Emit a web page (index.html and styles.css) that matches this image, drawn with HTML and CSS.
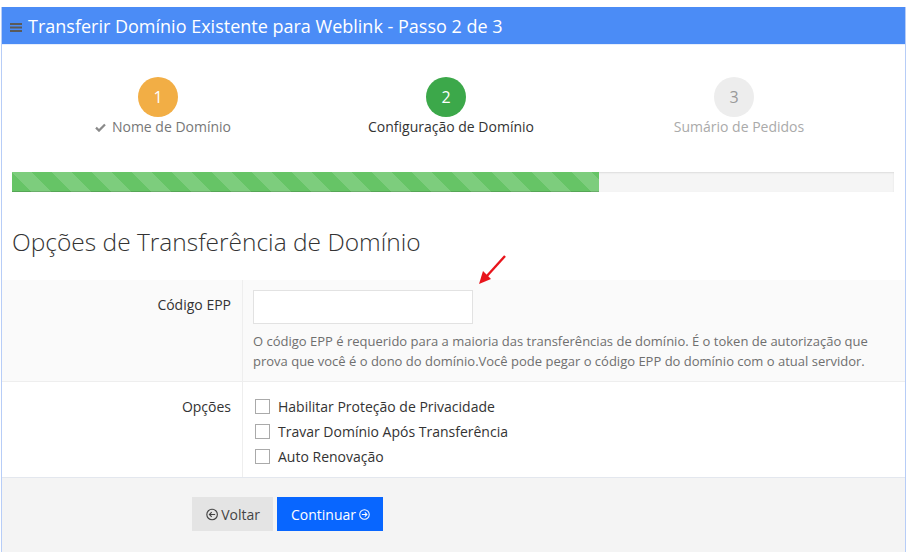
FILE: index.html
```html
<!DOCTYPE html>
<html lang="pt">
<head>
<meta charset="utf-8">
<title>Transferir Domínio</title>
<link rel="stylesheet" href="styles.css">
</head>
<body>
<div class="panel">
  <div class="panel-heading">
    <svg class="hamburger" width="12" height="10" viewBox="0 0 12 10"><rect x="0" y="1" width="12" height="2" fill="#5a5a5a"/><rect x="0" y="4.5" width="12" height="2" fill="#5a5a5a"/><rect x="0" y="8" width="12" height="2" fill="#5a5a5a"/></svg>
    <span class="title">Transferir Domínio Existente para Weblink - Passo 2 de 3</span>
  </div>
  <div class="panel-body">
    <div class="steps">
      <div class="step done">
        <div class="circle">1</div>
        <div class="label"><svg class="check" width="11" height="9" viewBox="0 0 11 9"><path d="M1 4.6 L4 7.6 L10 1.4" fill="none" stroke="#8a8a8a" stroke-width="2.2"/></svg>Nome de Domínio</div>
      </div>
      <div class="step active">
        <div class="circle">2</div>
        <div class="label">Configuração de Domínio</div>
      </div>
      <div class="step todo">
        <div class="circle">3</div>
        <div class="label">Sumário de Pedidos</div>
      </div>
    </div>
    <div class="progress"><div class="progress-bar" style="width:66.6%"></div></div>
    <h2 class="section-title">Opções de Transferência de Domínio</h2>
  </div>
  <div class="form">
    <div class="row shaded">
      <div class="row-label">Código EPP</div>
      <div class="row-field">
        <input class="text-input" type="text">
        <p class="help">O código EPP é requerido para a maioria das transferências de domínio. É o token de autorização que prova que você é o dono do domínio.Você pode pegar o código EPP do domínio com o atual servidor.</p>
      </div>
    </div>
    <div class="row">
      <div class="row-label opt-label">Opções</div>
      <div class="row-field opts">
        <label class="opt"><span class="box"></span>Habilitar Proteção de Privacidade</label>
        <label class="opt"><span class="box"></span>Travar Domínio Após Transferência</label>
        <label class="opt"><span class="box"></span>Auto Renovação</label>
      </div>
    </div>
  </div>
  <div class="panel-footer">
    <button class="btn btn-back"><svg width="15" height="15" viewBox="0 0 15 15"><circle cx="7.5" cy="7.5" r="6.5" fill="none" stroke="#444" stroke-width="1.4"/><path d="M11.2 7.5 H4.2 M7 4.7 L4.2 7.5 L7 10.3" fill="none" stroke="#444" stroke-width="1.4"/></svg>Voltar</button>
    <button class="btn btn-next">Continuar<svg width="15" height="15" viewBox="0 0 15 15"><circle cx="7.5" cy="7.5" r="6.5" fill="none" stroke="#fff" stroke-width="1.4"/><path d="M3.8 7.5 H10.8 M8 4.7 L10.8 7.5 L8 10.3" fill="none" stroke="#fff" stroke-width="1.4"/></svg></button>
  </div>
  <svg class="arrow" width="40" height="40" viewBox="0 0 40 40"><path d="M31 3 L12 24" stroke="#e8141b" stroke-width="2.4" fill="none"/><path d="M5 31 L9 18 L17 26 Z" fill="#e8141b"/></svg>
</div>
</body>
</html>
```
FILE: styles.css
```css
* { box-sizing: border-box; }
body {
  margin: 0;
  background: #fff;
  font-family: "Open Sans", "Liberation Sans", sans-serif;
  color: #333;
}
.panel {
  position: relative;
  margin: 7px 0 0 1px;
  width: 905px;
  border-left: 1px solid #b7cdf7;
  border-right: 1px solid #b7cdf7;
  border-bottom: 1px solid #b7cdf7;
}
.panel-heading {
  height: 38px;
  background: #4b8cf6;
  border-bottom: 1px solid #e6eefc;
  display: flex;
  align-items: center;
  padding-left: 8px;
}
.hamburger { margin-right: 6px; margin-top: 2px; }
.title { color: #fff; font-size: 18px; line-height: 24px; }
.panel-body { padding: 32px 10px 0 10px; }
.steps { display: flex; padding-left: 2px; }
.step {
  width: 288px;
  display: flex;
  flex-direction: column;
  align-items: center;
}
.circle {
  width: 40px; height: 40px; border-radius: 50%;
  display: flex; align-items: center; justify-content: center;
  font-size: 16px; color: #fff;
}
.done .circle { background: #f2ae45; }
.active .circle { background: #3ca84a; }
.todo .circle { background: #ededed; color: #999; }
.label { font-size: 14px; margin: 0 0 0 10px; line-height: 20px; display: flex; align-items: center; }
.done .label { color: #777; }
.active .label { color: #333; }
.todo .label { color: #aaa; }
.check { margin-right: 6px; }
.progress {
  margin-top: 35px;
  height: 20px;
  background: #f5f5f5;
  box-shadow: inset 0 1px 2px rgba(0,0,0,.1);
  width: 882px;
}
.progress-bar {
  height: 100%;
  background-color: #66c466;
  background-image: linear-gradient(45deg, rgba(255,255,255,.15) 25%, transparent 25%, transparent 50%, rgba(255,255,255,.15) 50%, rgba(255,255,255,.15) 75%, transparent 75%, transparent);
  background-size: 40px 40px;
  box-shadow: inset 0 -1px 0 rgba(0,0,0,.15);
}
.section-title {
  margin: 33px 0 0 0;
  font-weight: 300;
  font-size: 24.5px;
  line-height: 34px;
  color: #333;
  height: 55px;
}
.form { border-bottom: 1px solid #e3e7ee; }
.row { display: flex; }
.row + .row { border-top: 1px solid #eee; }
.shaded { background: #fafafa; }
.row-label {
  width: 241px;
  border-right: 1px solid #eee;
  text-align: right;
  padding: 15px 11px 0 0;
  font-size: 14px;
  line-height: 20px;
}
.opt-label { padding-top: 15px; }
.row-field { flex: 1; padding: 10px 10px 10px 10px; }
.text-input {
  display: block;
  width: 220px; height: 34px;
  border: 1px solid #e2e2e2;
  background: #fff;
  outline: none;
}
.help {
  margin: 7px 0 0 0;
  font-size: 13px;
  line-height: 20px;
  color: #6f6f6f;
}
.opts { padding: 12px 10px 8px 12px; }
.opt {
  display: flex; align-items: center;
  height: 25px;
  font-size: 14px;
  color: #333;
}
.box {
  width: 15px; height: 15px;
  border: 1px solid #aaa;
  background: #fff;
  margin-right: 8px;
}
.panel-footer {
  background: #f4f4f4;
  padding: 19px 0 21px 190px;
  display: flex;
  gap: 4px;
}
.btn {
  height: 34px;
  border: 0;
  font-family: "Open Sans", "Liberation Sans", sans-serif;
  font-size: 14px;
  display: flex; align-items: center; gap: 3px;
  padding: 0 13px;
}
.btn-back { background: #e4e4e4; color: #444; width: 81px; padding-left: 14px; }
.btn-next { background: #0866ff; color: #fff; width: 106px; padding-left: 14px; }
.arrow { position: absolute; left: 472px; top: 246px; }
```
